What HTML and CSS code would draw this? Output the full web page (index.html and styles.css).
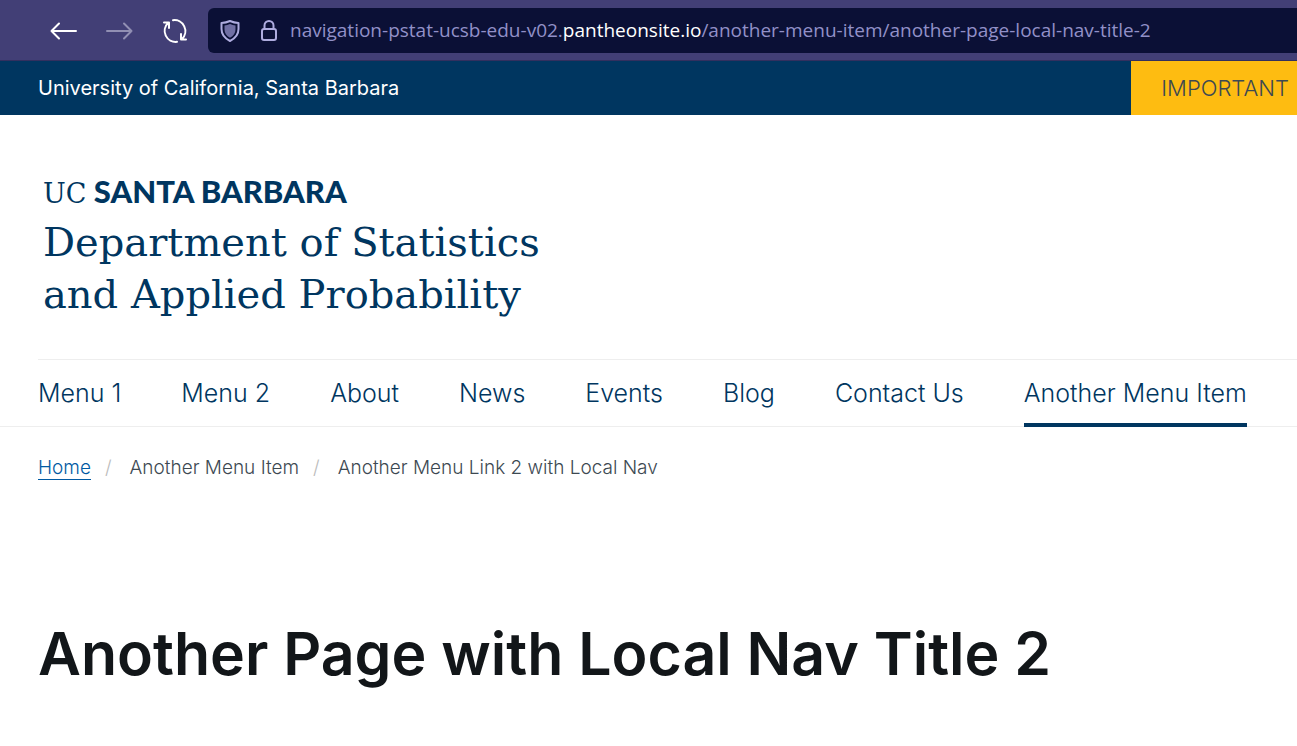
FILE: index.html
```html
<!DOCTYPE html>
<html lang="en">
<head>
<meta charset="utf-8">
<title>Another Page with Local Nav Title 2</title>
<link rel="stylesheet" href="styles.css">
</head>
<body>
<div class="browser-bar">
  <button class="tool" type="button" aria-label="Back"><svg width="28" height="28" viewBox="0 0 28 28"><path d="M27 14H2.500M10 6.500L2.500 14l7.500 7.500"/></svg></button>
  <button class="tool tool-off" type="button" aria-label="Forward" disabled><svg width="28" height="28" viewBox="0 0 28 28"><path d="M2 14h24.500M19 6.500l7.500 7.500-7.500 7.500"/></svg></button>
  <button class="tool" type="button" aria-label="Reload"><svg width="28" height="28" viewBox="0 0 28 28"><path d="M12 3.200A11 11 0 0 1 21 22M16 24.800A11 11 0 0 1 7 6M3 5.500H8v5.500M25 22.500H20v-5.500"/></svg></button>
  <div class="address">
    <svg class="address-icon" width="20" height="22" viewBox="0 0 20 22"><path d="M10 1c3 1.300 5.500 1.800 8.500 2v6c0 5.500-3.500 9.500-8.500 12C5 18.500 1.500 14.500 1.500 9V3C4.500 2.800 7 2.300 10 1z"/><path class="shield-core" d="M10 4c2 .9 3.500 1.200 5.500 1.400V9.500c0 3.500-2 6.300-5.500 8.300-3.500-2-5.500-4.800-5.500-8.300V5.400C6.500 5.200 8 4.900 10 4z"/></svg>
    <svg class="address-icon" width="18" height="22" viewBox="0 0 18 22"><path d="M4.500 9V5.500a4.500 4.500 0 0 1 9 0V9"/><rect x="2" y="9" width="14" height="11" rx="2"/></svg>
    <div class="url">navigation-pstat-ucsb-edu-v02.<span class="url-host">pantheonsite.io</span>/another-menu-item/another-page-local-nav-title-2</div>
  </div>
</div>
<div class="campus-bar">
  <a class="campus-name" href="#">University of California, Santa Barbara</a>
  <a class="alert" href="#">IMPORTANT</a>
</div>
<header class="header">
  <a class="brand" href="#">
    <span class="brand-campus"><span class="brand-uc">UC</span> SANTA BARBARA</span>
    <span class="brand-dept">Department of Statistics<br>and Applied Probability</span>
  </a>
</header>
<nav class="nav" aria-label="Main">
  <ul class="nav-list">
    <li><a href="#">Menu 1</a></li>
    <li><a href="#">Menu 2</a></li>
    <li><a href="#">About</a></li>
    <li><a href="#">News</a></li>
    <li><a href="#">Events</a></li>
    <li><a href="#">Blog</a></li>
    <li><a href="#">Contact Us</a></li>
    <li><a class="current" href="#">Another Menu Item</a></li>
  </ul>
</nav>
<main class="main">
  <ol class="crumbs">
    <li><a href="#">Home</a></li>
    <li>Another Menu Item</li>
    <li>Another Menu Link 2 with Local Nav</li>
  </ol>
  <h1 class="title">Another Page with Local Nav Title 2</h1>
</main>
</body>
</html>
```
FILE: styles.css
```css
* { box-sizing: border-box; }
body {
  margin: 0;
  background: #fff;
  color: #3d4952;
  font-family: Inter, "Liberation Sans", sans-serif;
  overflow-x: hidden;
}
a { color: inherit; text-decoration: none; white-space: nowrap; }
ul, ol { margin: 0; padding: 0; list-style: none; }

.browser-bar {
  display: flex;
  align-items: center;
  gap: 28px;
  padding: 8px 0 7px 49px;
  background: #423f76;
  border-bottom: 1px solid #33305f;
}
.tool {
  display: flex;
  padding: 0;
  border: 0;
  background: none;
  color: #fff;
}
.tool-off { color: #918fb3; }
.tool svg, .address-icon {
  fill: none;
  stroke: currentColor;
  stroke-width: 2;
  stroke-linecap: round;
  stroke-linejoin: round;
}
.address {
  flex: 1;
  display: flex;
  align-items: center;
  gap: 20px;
  min-width: 0;
  margin-left: -9px;
  padding-left: 12px;
  line-height: 45px;
  background: #0b1036;
  border-radius: 6px 0 0 6px;
  color: #aeacdf;
}
.address-icon { flex: none; }
.address-icon .shield-core { fill: #706fa4; stroke: none; }
.url {
  margin-left: -8px;
  color: #9290c8;
  font-family: "Open Sans", "Noto Sans", sans-serif;
  font-size: 19px;
  white-space: nowrap;
}
.url-host { color: #fff; }

.campus-bar {
  display: flex;
  justify-content: space-between;
  padding-left: 38px;
  background: #003660;
  line-height: 54px;
}
.campus-name {
  color: #fff;
  font-size: 20px;
}
.alert {
  padding: 0 8px 0 30px;
  background: #febc11;
  color: #3d4952;
  font-size: 22px;
  font-weight: 300;
}

.header { padding: 60px 43px 39px; }
.brand { display: inline-block; color: #003660; }
.brand-campus {
  display: block;
  font-family: Lato, sans-serif;
  font-size: 31px;
  font-weight: 900;
  line-height: 32px;
}
.brand-uc {
  font-family: "DejaVu Serif", serif;
  font-weight: 400;
  font-size: 27px;
}
.brand-dept {
  display: block;
  margin-top: 6px;
  font-family: "DejaVu Serif", serif;
  font-size: 40px;
  line-height: 52px;
}

.nav { padding-left: 38px; border-bottom: 1px solid #eee; }
.nav-list {
  display: flex;
  gap: 60px;
  border-top: 1px solid #eee;
  color: #003660;
  font-size: 25px;
  font-weight: 300;
  line-height: 67px;
}
.nav-list a { display: block; height: 67px; margin-bottom: -1px; }
.nav-list .current { border-bottom: 4px solid #003660; }

.main { padding: 29px 38px 54px; }
.crumbs {
  display: flex;
  font-size: 19px;
  font-weight: 300;
  line-height: 24px;
}
.crumbs li + li::before {
  content: "/";
  margin: 0 18px 0 14px;
  color: #bbb;
}
.crumbs a { display: block; color: #005aa3; border-bottom: 1px solid #005aa3; line-height: 23px; }
.title {
  margin: 134px 0 0;
  color: #121619;
  font-size: 59px;
  font-weight: 600;
  line-height: 80px;
  white-space: nowrap;
}
```
